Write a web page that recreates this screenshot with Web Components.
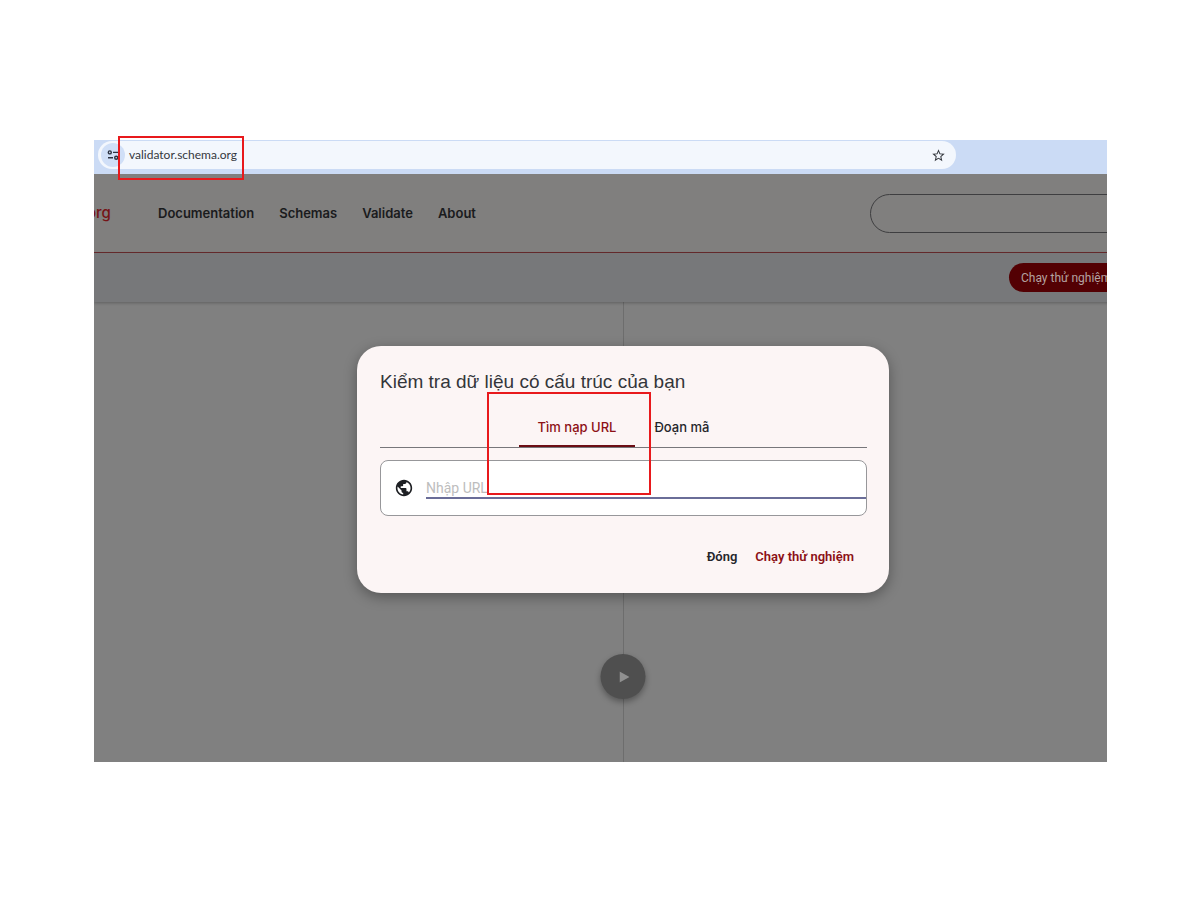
<!DOCTYPE html>
<html lang="vi">
<head>
<meta charset="utf-8">
<title>Schema Markup Validator</title>
<style>
body { margin: 0; background: #fff; font-family: Inter, "Liberation Sans", sans-serif; }
</style>
</head>
<body>
<validator-shot></validator-shot>

<template id="shot">
<style>
:host { display: block; padding: 140px 93px 140px 94px; }
main { position: relative; }
.clip { overflow: hidden; }
.page { position: relative; width: calc(100% + 45px); background: #808080; }
.play { position: absolute; left: 50%; top: 480px; transform: translateX(-50%); }
validator-dialog { position: absolute; left: 50%; top: 172px; transform: translateX(-50%); }
.mark { position: absolute; box-sizing: border-box; border: 2px solid #e8191c; pointer-events: none; }
.mark.address { left: 24px; top: -4px; width: 126px; height: 44px; }
.mark.tab { left: 393px; top: 252px; width: 164px; height: 103px; }
</style>
<main>
  <div class="clip">
    <browser-bar>validator.schema.org</browser-bar>
    <div class="page">
      <site-header></site-header>
      <tool-bar>Chạy thử nghiệm</tool-bar>
      <split-panes></split-panes>
      <play-button class="play"></play-button>
      <validator-dialog></validator-dialog>
    </div>
  </div>
  <div class="mark address"></div>
  <div class="mark tab"></div>
</main>
</template>

<template id="bar">
<style>
:host { display: flex; height: 34px; background: #cbdbf5; align-items: flex-start; padding-left: 4px; }
.omni { box-sizing: border-box; display: flex; align-items: center; flex: 0 1 858px; height: 28px; margin-top: 1px; border-radius: 14px; background: #f3f7fd; padding: 0 10px 0 3px; }
button { border: 0; background: none; padding: 0; display: flex; }
.site { width: 24px; height: 24px; border-radius: 12px; background: #d0dff7; align-items: center; justify-content: center; }
.url { flex: 1; font: 12px/16px Lato, "Open Sans", sans-serif; color: #35383d; padding-left: 4px; }
</style>
<div class="omni">
  <button class="site" aria-label="Site information">
    <svg width="12" height="12" viewBox="0 0 12 12" fill="none" stroke="#2c3342" stroke-width="1.4"><circle cx="2.8" cy="3.4" r="1.5"/><path d="M6 3.4h5M1 8.7h5"/><circle cx="9.2" cy="8.7" r="1.5"/></svg>
  </button>
  <span class="url"><slot></slot></span>
  <button aria-label="Bookmark">
    <svg width="15" height="15" viewBox="0 0 24 24" fill="#33373d"><path d="M22 9.24l-7.19-.62L12 2 9.19 8.63 2 9.24l5.46 4.73L5.82 21 12 17.27 18.18 21l-1.63-7.03L22 9.24zM12 15.4l-3.76 2.27 1-4.28-3.32-2.88 4.38-.38L12 6.1l1.71 4.04 4.38.38-3.32 2.88 1 4.28L12 15.4z"/></svg>
  </button>
</div>
</template>

<template id="header">
<style>
:host { box-sizing: border-box; display: flex; align-items: center; height: 79px; background: #807f7e; border-bottom: 1px solid #682b2d; }
a { text-decoration: none; color: #1a1b1d; }
.logo { color: #751316; font: 500 15px/20px Inter, sans-serif; margin-left: -7px; width: 71px; }
nav { display: flex; gap: 25px; flex: 1; font: 600 13px/20px Inter, sans-serif; }
input { box-sizing: border-box; width: 282px; height: 39px; border: 1px solid #3e3e40; border-radius: 20px; background: none; padding: 0 16px; outline: 0; }
</style>
<a class="logo" href="#">org</a>
<nav><a href="#">Documentation</a><a href="#">Schemas</a><a href="#">Validate</a><a href="#">About</a></nav>
<input type="search" aria-label="Search">
</template>

<template id="tools">
<style>
:host { box-sizing: border-box; position: relative; display: flex; justify-content: flex-end; align-items: center; height: 49px; background: #77787a; box-shadow: 0 1px 3px #0004; padding-right: 26px; }
button { box-sizing: border-box; height: 29px; border: 0; border-radius: 15px; background: #530003; color: #b3a2a1; font: 12px/20px Roboto, sans-serif; width: 117px; padding: 0 12px; text-align: left; white-space: nowrap; }
</style>
<button><slot></slot></button>
</template>

<template id="panes">
<style>
:host { display: grid; grid-template-columns: 1fr 1fr; height: 460px; }
div + div { border-left: 1px solid #6d6d6d; }
</style>
<div></div><div></div>
</template>

<template id="play">
<style>
:host { display: block; }
button { display: flex; align-items: center; justify-content: center; width: 45px; height: 45px; border: 0; border-radius: 50%; padding: 0 0 0 2px; background: #4f4f4f; box-shadow: 0 3px 6px #0005; }
</style>
<button aria-label="Run"><svg width="10" height="12" viewBox="0 0 10 12"><path d="M0 0.5v11L10 6z" fill="#909090"/></svg></button>
</template>

<template id="dialog">
<style>
:host { box-sizing: border-box; display: block; width: 532px; padding: 22px 22px 26px 23px; border-radius: 24px; background: #fcf5f5; box-shadow: 0 4px 14px #0005; color: #25262b; }
h1 { margin: 0; font: 400 19px/28px "Liberation Sans", sans-serif; color: #34353a; }
button { border: 0; background: none; padding: 0; color: inherit; }
.tabs { display: flex; justify-content: center; border-bottom: 1px solid #77767a; margin-top: 12px; }
.tabs button { font: 500 13px/20px Inter, sans-serif; padding: 9px 19px 8px; border-bottom: 2px solid transparent; white-space: nowrap; }
.tabs button[aria-selected=true] { color: #8c1016; border-color: #6c0d14; }
.field { box-sizing: border-box; display: flex; align-items: center; gap: 13px; height: 56px; margin-top: 12px; border: 1px solid #97979a; border-radius: 8px; background: #fff; padding-left: 14px; }
input { box-sizing: border-box; flex: 1; min-width: 0; height: 22px; border: 0; border-bottom: 2px solid #6a6d98; background: none; outline: 0; padding: 2px 0 0; font: 14px/18px Roboto, sans-serif; }
input::placeholder { color: #bdbdbd; opacity: 1; }
.actions { display: flex; justify-content: flex-end; gap: 18px; margin-top: 31px; padding-right: 13px; }
.actions button { font: 600 13px/20px Roboto, sans-serif; }
.actions .run { color: #8c1016; }
</style>
<h1>Kiểm tra dữ liệu có cấu trúc của bạn</h1>
<div class="tabs" role="tablist">
  <button role="tab" aria-selected="true">Tìm nạp URL</button>
  <button role="tab" aria-selected="false">Đoạn mã</button>
</div>
<label class="field">
  <svg width="18" height="18" viewBox="1 1 22 22" fill="#1d1f23"><path d="M12 2C6.48 2 2 6.48 2 12s4.48 10 10 10 10-4.48 10-10S17.52 2 12 2zm-1 17.93c-3.95-.49-7-3.85-7-7.93 0-.62.08-1.21.21-1.79L9 15v1c0 1.1.9 2 2 2v1.93zm6.9-2.54c-.26-.81-1-1.39-1.9-1.39h-1v-3c0-.55-.45-1-1-1H8v-2h2c.55 0 1-.45 1-1V7h2c1.1 0 2-.9 2-2v-.41c2.93 1.19 5 4.06 5 7.41 0 2.08-.8 3.97-2.1 5.39z"/></svg>
  <input type="text" placeholder="Nhập URL" aria-label="Nhập URL">
</label>
<div class="actions"><button>Đóng</button><button class="run">Chạy thử nghiệm</button></div>
</template>

<script>
function define(name, templateId, setup) {
  customElements.define(name, class extends HTMLElement {
    constructor() {
      super();
      this.attachShadow({ mode: "open" }).append(
        document.getElementById(templateId).content.cloneNode(true));
    }
    connectedCallback() { if (setup) setup(this.shadowRoot); }
  });
}
define("browser-bar", "bar");
define("site-header", "header");
define("tool-bar", "tools");
define("split-panes", "panes");
define("play-button", "play");
define("validator-dialog", "dialog", root => {
  const tabs = root.querySelectorAll("[role=tab]");
  tabs.forEach(tab => {
    tab.onclick = () => tabs.forEach(t => t.setAttribute("aria-selected", String(t === tab)));
  });
});
define("validator-shot", "shot");
</script>
</body>
</html>
